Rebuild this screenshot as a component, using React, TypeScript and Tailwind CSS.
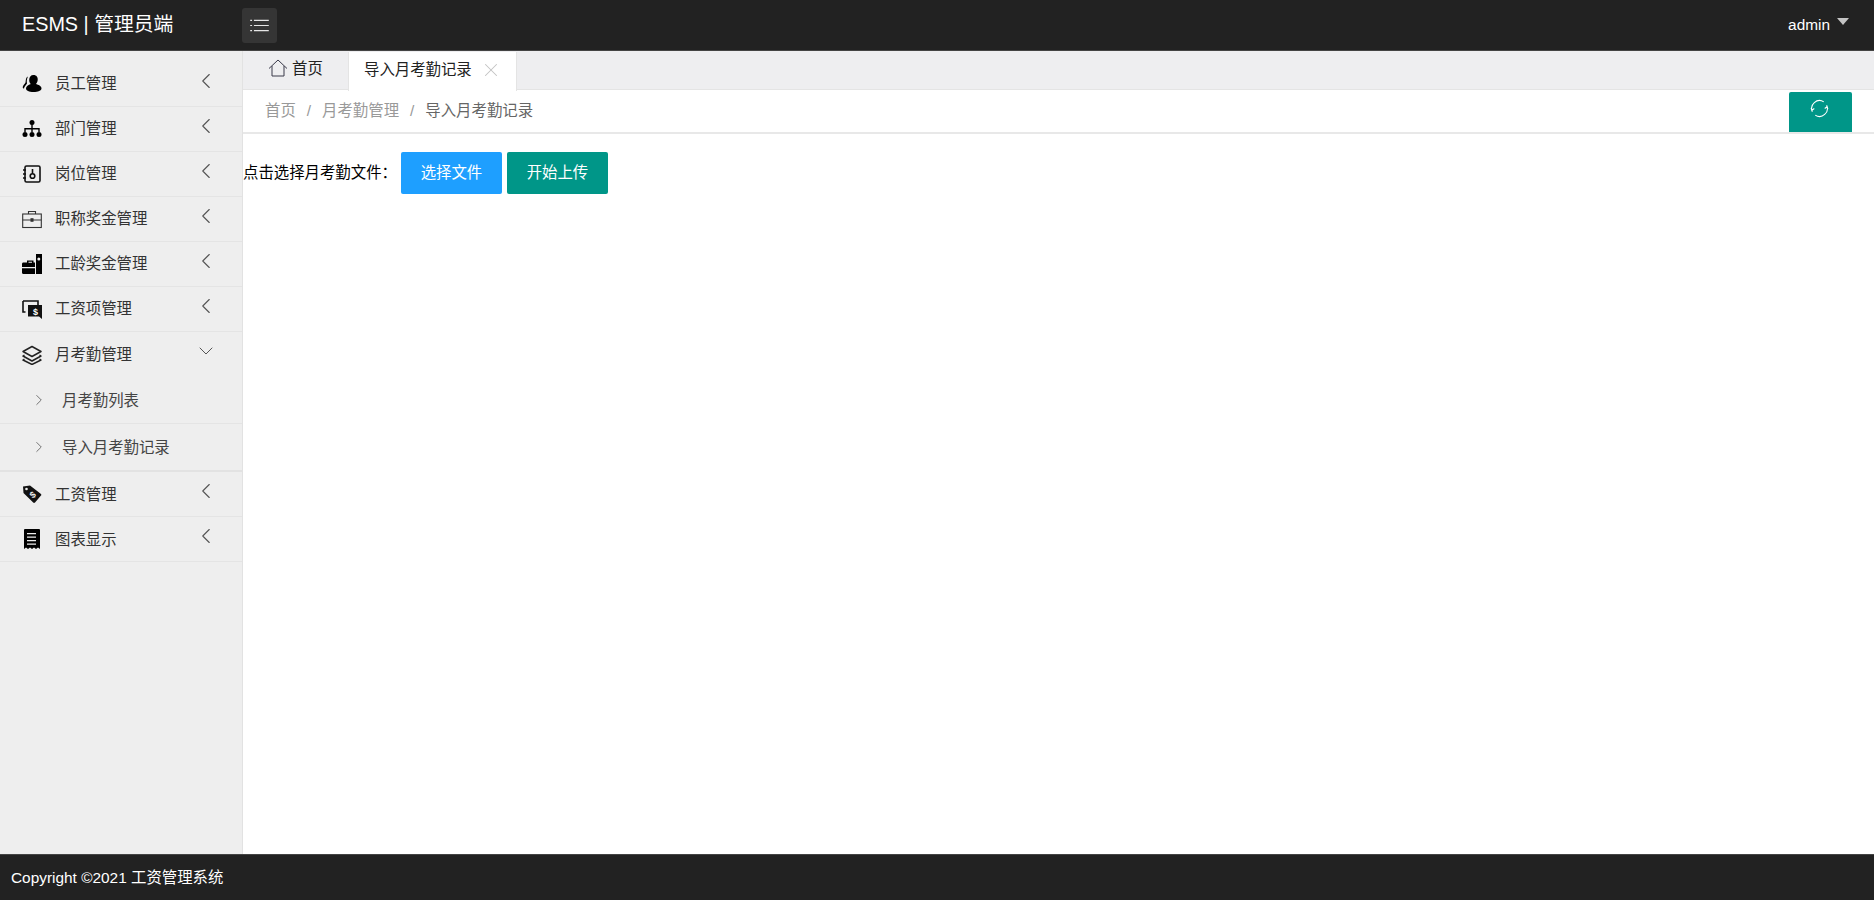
import { ChevronLeft, ChevronDown, ChevronRight, X } from "lucide-react";
import type { ReactNode } from "react";

const Solid = ({ children }: { children: ReactNode }) => (
  <svg viewBox="0 0 20 20" className="w-5 h-5" fill="#000">
    {children}
  </svg>
);

const icons: Record<string, ReactNode> = {
  users: (
    <Solid>
      <path d="M11.500 1c3 0 4.500 2.200 4.200 5-.2 1.700-.8 3-1.800 4 2.500.8 5.600 2 5.600 4.500 0 2-3.500 3.500-8 3.500s-7.500-1.500-7.500-3.500c0-2.300 2.300-3.700 4.800-4.500C7.700 9 7.200 7.700 7.200 6c0-3 1.500-5 4.300-5z" />
      <path d="M6 2.500C3.500 3.500 4 6.500 3.500 8.500 3 10 1 11 .7 13c0 1 .8 1.500 1.300 1.500 0-2 2-3 3-5C4.500 7 5 4.500 6 2.500z" />
    </Solid>
  ),
  sitemap: (
    <Solid>
      <circle cx="10" cy="3.500" r="2.500" />
      <circle cx="3" cy="15.500" r="2.500" />
      <circle cx="10" cy="15.500" r="2.500" />
      <circle cx="17" cy="15.500" r="2.500" />
      <path d="M9.300 5h1.400v4H17.700v4h-1.400V10.400H10.700V13H9.300V10.400H3.700V13H2.300V9H9.300z" />
    </Solid>
  ),
  badge: (
    <svg viewBox="0 0 20 20" className="w-5 h-5" fill="none" stroke="#111" strokeWidth="1.600">
      <rect x="3" y="2" width="15" height="16" rx="1.500" />
      <path d="M1 6h3M1 10h3M1 14h3" />
      <circle cx="10.500" cy="12" r="2.300" />
      <path d="M10.500 5v4.500" />
    </svg>
  ),
  briefcase: (
    <svg viewBox="0 0 20 20" className="w-5 h-5" fill="none" stroke="#333" strokeWidth="1.100">
      <rect x="0.700" y="5" width="18.600" height="13.500" />
      <path d="M0.700 11h18.600M6.500 5V2.500h7V5" />
      <rect x="9" y="9.800" width="2" height="2.400" fill="#333" />
    </svg>
  ),
  tools: (
    <Solid>
      <path d="M14 0h6v20h-6zM1 8.500h4V6.500h6.500v2H13V20H2a1.500 1.500 0 0 1-2-1.500V10q0-1.500 1-1.500z" />
      <path d="M6.500 7.800h3.500v1H6.500zM0 13h13v1.200H0z" fill="#eee" />
      <circle cx="16.800" cy="5" r="1.500" fill="#eee" />
    </Solid>
  ),
  money: (
    <svg viewBox="0 0 20 20" className="w-5 h-5">
      <path d="M1 2h15v4" fill="none" stroke="#111" strokeWidth="1.600" />
      <path d="M1 2v11h2.500" fill="none" stroke="#111" strokeWidth="1.600" />
      <path d="M6 6h14v14l-3-2.500H6z" fill="#111" />
      <text x="11" y="15.500" fontSize="9" fontWeight="700" fill="#fff" fontFamily="'Liberation Sans', sans-serif">$</text>
    </svg>
  ),
  layers: (
    <svg viewBox="0 0 20 20" className="w-5 h-5" fill="none" stroke="#222" strokeWidth="1.500" strokeLinejoin="round">
      <path d="M10 1.500 19 6.500 10 11.500 1 6.500z" />
      <path d="M2.500 10 1 11 10 16 19 11l-1.500-1" />
      <path d="M2.500 14 1 15l9 4.500 9-4.500-1.500-1" />
    </svg>
  ),
  tag: (
    <svg viewBox="0 0 20 20" className="w-5 h-5">
      <path d="M1 2.500 8 1.500 19 10q.8 1 0 1.500L13 18.500q-1 .8-1.800 0L1.500 9z" fill="#111" />
      <circle cx="4.500" cy="5" r="1.300" fill="#eee" />
      <text x="7.500" y="14" fontSize="9" fontWeight="700" fill="#eee" fontFamily="'Liberation Sans', sans-serif" transform="rotate(-40 10 10)">$</text>
    </svg>
  ),
  receipt: (
    <Solid>
      <path d="M2 0h15q1 0 1 1v19l-2-1.500-2 1.500-2-1.500-2 1.500-2-1.500-2 1.500-2-1.500-2 1.500V1q0-1 1-1z" />
      <path d="M5 4h9v1.300H5zM5 7.500h9v1.300H5zM5 11h9v1.300H5zM5 14.500h9v1.300H5z" fill="#eee" />
    </Solid>
  ),
};

const beforeOpen = [
  { label: "员工管理", icon: "users" },
  { label: "部门管理", icon: "sitemap" },
  { label: "岗位管理", icon: "badge" },
  { label: "职称奖金管理", icon: "briefcase" },
  { label: "工龄奖金管理", icon: "tools" },
  { label: "工资项管理", icon: "money" },
];

const afterOpen = [
  { label: "工资管理", icon: "tag" },
  { label: "图表显示", icon: "receipt" },
];

function MenuRow({ label, icon, open }: { label: string; icon: string; open?: boolean }) {
  return (
    <div className={`flex items-center h-[45.1px] pl-[22px] text-[15.4px] text-[#333] ${open ? "" : "border-b border-[#e4e4e4]"}`}>
      <span className="w-[33px] flex items-center">{icons[icon]}</span>
      <span>{label}</span>
      {open ? (
        <ChevronDown className="ml-auto mr-[24px] mb-[8px] w-[24px] h-[24px] text-[#555]" strokeWidth={1} />
      ) : (
        <ChevronLeft className="ml-auto mr-[23px] mb-[6px] w-[26px] h-[26px] text-[#555]" strokeWidth={1} />
      )}
    </div>
  );
}

function SubRow({ label, last }: { label: string; last?: boolean }) {
  return (
    <div className={`flex items-center pl-[30px] text-[15.4px] text-[#444] border-b ${last ? "h-[48px] border-[#e2e2e2] border-b-2" : "h-[47px] border-[#e4e4e4]"}`}>
      <ChevronRight className="w-[18px] h-[18px] text-[#666] mr-[14px]" strokeWidth={1.200} />
      <span>{label}</span>
    </div>
  );
}

export default function App() {
  return (
    <div
      className="flex flex-col h-[900px] w-[1874px] overflow-hidden bg-white"
      style={{ fontFamily: "'Liberation Sans', 'Noto Sans CJK SC', sans-serif" }}
    >
      <header className="flex items-center h-[51px] shrink-0 bg-[#222222] border-b border-[#444444] text-white">
        <div className="w-[242px] pl-[22px] text-[19.8px]">ESMS | 管理员端</div>
        <button className="flex items-center justify-center w-[35px] h-[35px] rounded-[3px] bg-[#353535]">
          <svg viewBox="0 0 20 14" className="w-[19px] h-[13px]" fill="none" stroke="#e6e6e6" strokeWidth="1.300">
            <path d="M0 1.500h2M4 1.500h16M0 7h2M4 7h16M0 12.500h2M4 12.500h16" />
          </svg>
        </button>
        <div className="ml-auto flex items-center mr-[25px] text-[15.4px]">
          <span>admin</span>
          <span className="ml-[7px] mb-[6px] w-0 h-0 border-x-[6.500px] border-x-transparent border-t-[7px] border-t-[#c4c4c4]" />
        </div>
      </header>

      <div className="flex flex-1 min-h-0">
        <aside className="w-[243px] shrink-0 bg-[#eeeeee] border-r border-[#e2e2e2] pt-[10.5px]">
          {beforeOpen.map((item) => (
            <MenuRow key={item.label} {...item} />
          ))}
          <MenuRow label="月考勤管理" icon="layers" open />
          <SubRow label="月考勤列表" />
          <SubRow label="导入月考勤记录" last />
          {afterOpen.map((item) => (
            <MenuRow key={item.label} {...item} />
          ))}
        </aside>

        <main className="flex-1 min-w-0 flex flex-col">
          <div className="flex h-[39px] shrink-0 bg-[#eeeef0] border-b border-[#e4e4e4] text-[15.4px] text-[#222]">
            <div className="flex items-center w-[105px] pl-[25px] pb-[2px]">
              <svg viewBox="0 0 20 18" className="w-[20px] h-[18px] mr-[4px] mb-[2px]" fill="none" stroke="#3a3a4a" strokeWidth="1">
                <path d="M1 9.500 10 1l9 8.500M4 7v10h12V7" />
              </svg>
              <span>首页</span>
            </div>
            <div className="flex items-center w-[169px] h-[39px] mt-[1px] pl-[15px] pb-[4px] bg-white border-x border-[#e4e4e4]">
              <span>导入月考勤记录</span>
              <X className="w-[22px] h-[22px] ml-[8px] text-[#c2c2c2]" strokeWidth={1.100} />
            </div>
          </div>

          <div className="flex items-end h-[44px] shrink-0 pl-[22px] pr-[22px] border-b-2 border-[#e8e8e8] text-[15.4px] text-[#999]">
            <div className="flex items-center h-full pb-[1px]">
              <span>首页</span>
              <span className="mx-[11px]">/</span>
              <span>月考勤管理</span>
              <span className="mx-[11px]">/</span>
              <span className="text-[#666]">导入月考勤记录</span>
            </div>
            <button className="flex items-center justify-center ml-auto w-[63px] h-[40px] pb-[8px] rounded-t-[2px] bg-[#009688]">
              <svg viewBox="0 0 20 20" className="w-[19px] h-[19px] mr-[2px]" fill="none" stroke="#fff" strokeWidth="1.100">
                <path d="M2.500 13.500A8.300 8.300 0 0 1 14.500 3" />
                <path d="M17.500 6.500A8.300 8.300 0 0 1 5.500 17" />
                <path d="M1 9.500l1.500 2 2-1.500M19 10.500l-1.500-2-2 1.500" />
              </svg>
            </button>
          </div>

          <div className="flex items-center mt-[18px] text-[15.4px] text-black">
            <span className="mr-[4px]">点击选择月考勤文件：</span>
            <button className="w-[101px] h-[42px] rounded-[2px] bg-[#1e9fff] text-white">选择文件</button>
            <button className="w-[101px] h-[42px] ml-[5px] rounded-[2px] bg-[#009688] text-white">开始上传</button>
          </div>
        </main>
      </div>

      <footer className="flex items-center h-[46px] shrink-0 pl-[11px] bg-[#222222] border-t border-[#444444] text-[15.4px] text-white">
        Copyright ©2021 工资管理系统
      </footer>
    </div>
  );
}
